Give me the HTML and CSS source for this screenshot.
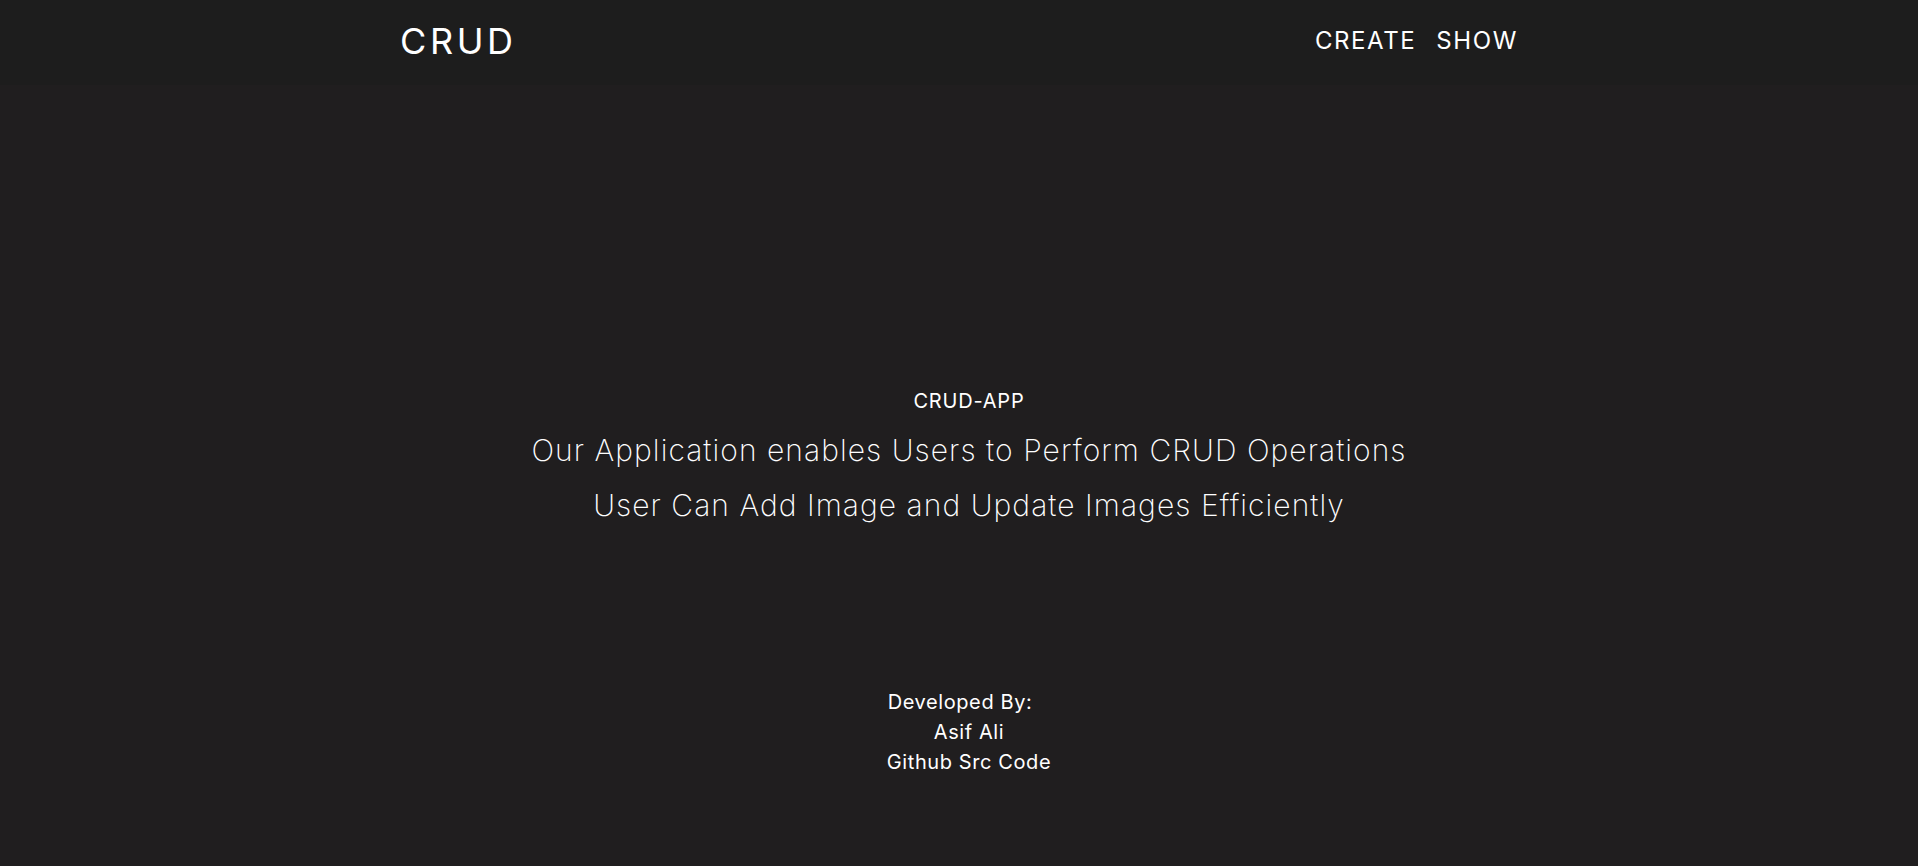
FILE: index.html
```html
<!DOCTYPE html>
<html lang="en">
<head>
<meta charset="utf-8">
<title>CRUD</title>
<link rel="stylesheet" href="styles.css">
</head>
<body>
<header class="topbar">
  <div class="topbar-inner">
    <a class="brand" href="#">CRUD</a>
    <nav class="nav">
      <a class="nav-link" href="#">CREATE</a>
      <a class="nav-link" href="#">SHOW</a>
    </nav>
  </div>
</header>
<main class="hero">
  <h1 class="hero-title">CRUD-APP</h1>
  <p class="hero-line">Our Application enables Users to Perform CRUD Operations</p>
  <p class="hero-line">User Can Add Image and Update Images Efficiently</p>
</main>
<footer class="credits">
  <div class="credits-block">
    <p class="credit-label">Developed By:</p>
    <p class="credit-name">Asif Ali</p>
    <a class="credit-link" href="#">Github Src Code</a>
  </div>
</footer>
</body>
</html>
```
FILE: styles.css
```css
* { box-sizing: border-box; }
html, body { margin: 0; padding: 0; }
body {
  background: #201e1f;
  color: #ffffff;
  font-family: "Inter", "Open Sans", sans-serif;
  height: 866px;
  overflow: hidden;
}
a { color: #ffffff; text-decoration: none; }
p { margin: 0; }

.topbar {
  background: #1d1d1d;
  height: 85px;
}
.topbar-inner {
  width: 1118px;
  margin: 0 auto;
  height: 100%;
  display: flex;
  align-items: center;
  justify-content: space-between;
  padding-bottom: 4px;
}
.brand {
  font-size: 36px;
  font-weight: 400;
  letter-spacing: 3.6px;
}
.nav { display: flex; gap: 20px; }
.nav-link { font-size: 24px; font-weight: 400; letter-spacing: 1.6px; }

.hero {
  margin-top: 304px;
  padding-left: 20px;
  display: flex;
  flex-direction: column;
  align-items: center;
}
.hero-title {
  margin: 0;
  font-size: 20px;
  font-weight: 400;
  letter-spacing: 0.8px;
}
.hero-line {
  font-size: 30px;
  font-weight: 200;
  letter-spacing: 1.05px;
  margin-top: 19px;
}
.credits {
  margin-top: 164px;
  padding-left: 20px;
  display: flex;
  justify-content: center;
}
.credits-block {
  display: flex;
  flex-direction: column;
  align-items: center;
  font-size: 20px;
  line-height: 30px;
  letter-spacing: 0.6px;
}
.credit-label { margin-right: 18px; }
```
